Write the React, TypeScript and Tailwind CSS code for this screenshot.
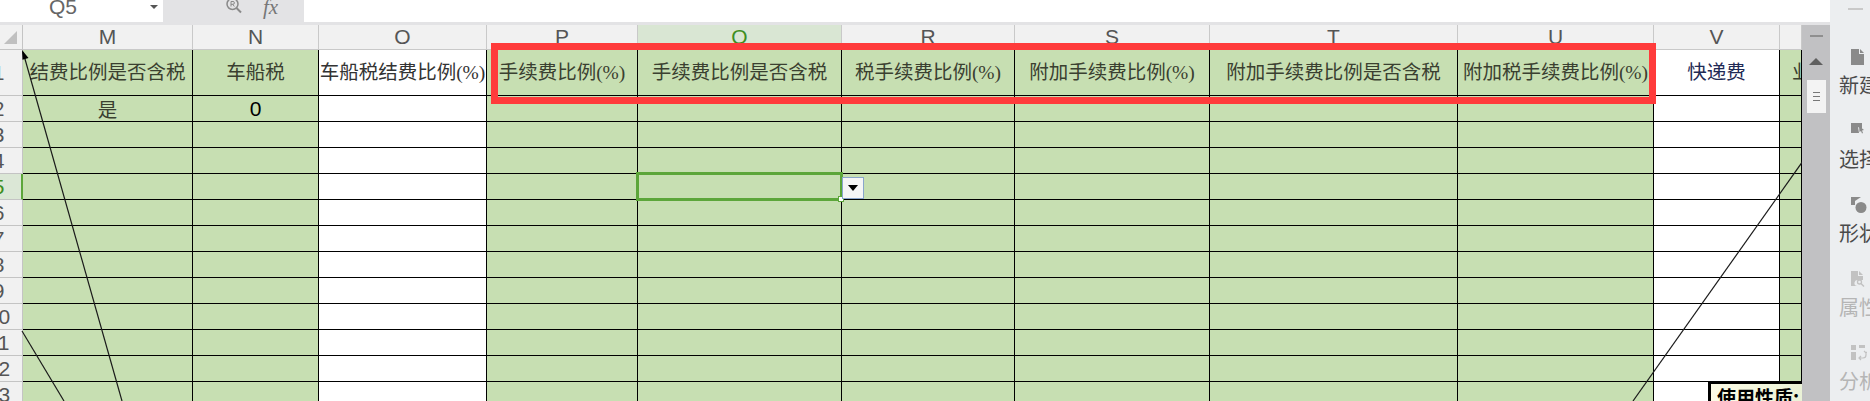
import React from 'react';

const SERIF = "font-['Liberation_Serif','Noto_Sans_CJK_SC',serif]";

const columns = [
  { key: 'M', fill: 'bg-[#c7dfb2]', title: '结费比例是否含税' },
  { key: 'N', fill: 'bg-[#c7dfb2]', title: '车船税' },
  { key: 'O', fill: 'bg-white', title: '车船税结费比例(%)' },
  { key: 'P', fill: 'bg-[#c7dfb2]', title: '手续费比例(%)' },
  { key: 'Q', fill: 'bg-[#c7dfb2]', title: '手续费比例是否含税' },
  { key: 'R', fill: 'bg-[#c7dfb2]', title: '税手续费比例(%)' },
  { key: 'S', fill: 'bg-[#c7dfb2]', title: '附加手续费比例(%)' },
  { key: 'T', fill: 'bg-[#c7dfb2]', title: '附加手续费比例是否含税' },
  { key: 'U', fill: 'bg-[#c7dfb2]', title: '附加税手续费比例(%)' },
  { key: 'V', fill: 'bg-white', title: '快递费' },
  { key: 'W', fill: 'bg-[#c7dfb2]', title: '业务' },
];

const rowNumbers = [2, 3, 4, 5, 6, 7, 8, 9, 10, 11, 12, 13];

const RowLabel: React.FC<{ n: number; tall?: boolean }> = ({ n, tall }) => (
  <div
    className={`flex items-center overflow-hidden border-r border-b border-[#c4c4c4] text-[21px] ${
      tall ? 'h-[46px]' : 'h-[26px]'
    } ${n === 5 ? 'bg-[#dbe7d6] text-[#3f8f1f] border-r-2 border-r-[#5ca63a]' : 'bg-[#f1f1f1] text-[#555555]'}`}
  >
    <span className="-ml-[25px] w-[47px] shrink-0 text-center">{n}</span>
  </div>
);

const PanelItem: React.FC<{ label: string; muted?: boolean; icon: React.ReactNode }> = ({ label, muted, icon }) => (
  <div className="h-[74px] shrink-0 pl-[9px]">
    <div className="h-[26px] pl-[12px]">{icon}</div>
    <div
      className={`w-[31px] overflow-hidden whitespace-nowrap text-[20px] leading-[20px] font-['Noto_Sans_CJK_SC',sans-serif] ${
        muted ? 'text-[#b5b5b5]' : 'text-[#4a4a4a]'
      }`}
    >
      {label}
    </div>
  </div>
);

export default function App() {
  return (
    <div className="flex h-[401px] w-[1870px] overflow-hidden bg-[#eceef0] font-['Liberation_Sans',sans-serif]">
      <div className="flex w-[1830px] shrink-0 flex-col">
        {/* formula bar */}
        <div className="flex h-[25px] shrink-0 bg-[#e3e3e5] pb-[3px]">
          <div className="relative flex w-[163px] items-start overflow-hidden bg-white pl-[49px] text-[21px] leading-[16px] text-[#666666]">
            <span className="-mt-[1px]">Q5</span>
            <span className="absolute left-[150px] top-[5px] border-x-[4px] border-t-[4px] border-x-transparent border-t-[#555555]" />
          </div>
          <div className="flex w-[141px] items-start overflow-hidden pl-[63px]">
            <svg width="16" height="14" viewBox="0 0 16 14" fill="none" stroke="#8a8a8a" strokeWidth="1.5">
              <circle cx="6.5" cy="4" r="5.5" />
              <path d="M10.5 8l4.5 4.5" strokeWidth="2" />
              <path d="M5 6.5v-5h2a1.3 1.3 0 010 2.8H5M6.8 4.3l1.5 2.2" strokeWidth="1" />
            </svg>
            <span className="-mt-[5px] ml-[21px] font-['Liberation_Serif',serif] text-[21px] italic leading-[24px] text-[#777777]">fx</span>
          </div>
          <div className="flex-1 bg-white" />
        </div>

        <div className="flex min-h-0 flex-1">
          {/* sheet */}
          <div className="relative w-[1802px] shrink-0 overflow-hidden">
            <div className="grid grid-cols-[23px_170px_126px_168px_151px_204px_173px_195px_248px_196px_126px_22px]">
              {/* column letters */}
              <div className="flex h-[25px] items-center justify-center border-r border-b border-[#c4c4c4] bg-[#f1f1f1]">
                <div className="mr-[1px] h-0 w-0 border-b-[13px] border-l-[13px] border-b-[#c0c0c0] border-l-transparent" />
              </div>
              {columns.map((c) => (
                <div
                  key={c.key}
                  className={`flex h-[25px] items-center justify-center border-r border-b border-[#c9c9c9] text-[21px] ${
                    c.key === 'Q' ? 'bg-[#d9e6d3] text-[#3f8f1f]' : 'bg-[#f1f1f1] text-[#555555]'
                  }`}
                >
                  {c.key !== 'W' && c.key}
                </div>
              ))}

              {/* title row */}
              <RowLabel n={1} tall />
              {columns.map((c) => (
                <div
                  key={c.key}
                  className={`flex h-[46px] items-center overflow-hidden whitespace-nowrap border-r border-b border-black text-[19.5px] ${SERIF} ${c.fill} ${
                    c.key === 'W' ? 'justify-start pl-[12px]' : 'justify-center'
                  } ${c.key === 'V' ? 'text-[#1f2a55]' : c.key === 'O' ? 'text-[#333333]' : 'text-[#3a4030]'}`}
                >
                  {c.title}
                </div>
              ))}

              {/* data rows */}
              {rowNumbers.map((n) => (
                <React.Fragment key={n}>
                  <RowLabel n={n} />
                  {columns.map((c) => (
                    <div
                      key={c.key}
                      className={`flex h-[26px] items-center justify-center border-r border-b border-black ${c.fill}`}
                    >
                      {n === 2 && c.key === 'M' && (
                        <span className="font-['Noto_Sans_CJK_SC',sans-serif] text-[19.5px] text-[#3a4030]">是</span>
                      )}
                      {n === 2 && c.key === 'N' && <span className="text-[21px] font-medium text-black">0</span>}
                    </div>
                  ))}
                </React.Fragment>
              ))}
            </div>

            {/* drawn arrows on the sheet */}
            <svg className="pointer-events-none absolute left-0 top-0" width="1802" height="376" fill="none" stroke="#1a1a1a" strokeWidth="1.2">
              <path d="M23 27L122 376" />
              <path d="M22 306L64 376" />
              <path d="M1803 136L1633 376" />
              <path d="M22 25l6.500 8-6 1.800z" fill="#000000" stroke="none" />
            </svg>

            {/* selected cell */}
            <div className="absolute left-[636px] top-[147px] h-[29px] w-[207px] border-[3px] border-[#5ca63a]" />
            <div className="absolute left-[838px] top-[171px] h-[6px] w-[6px] border border-[#5ca63a] bg-white" />
            <div className="absolute left-[842px] top-[152px] flex h-[22px] w-[22px] items-center justify-center border border-[#8aa6cc] bg-[#f6f6f6]">
              <span className="border-x-[5px] border-t-[6px] border-x-transparent border-t-black" />
            </div>

            {/* highlight box */}
            <div className="absolute left-[491px] top-[18px] h-[61px] w-[1165px] border-[7px] border-[#ff3b3b]" />

            {/* note box */}
            <div className="absolute left-[1708px] top-[356px] h-[40px] w-[120px] border-l-[3px] border-t-[3px] border-black bg-gradient-to-r from-[#fdfbe6] to-[#e4efd2] pl-[6px] font-['Noto_Sans_CJK_SC',sans-serif] text-[19px] font-bold leading-[26px] text-black">
              使用性质:
            </div>
          </div>

          {/* vertical scrollbar */}
          <div className="flex w-[28px] shrink-0 flex-col items-center bg-[#c1c1c3]">
            <div className="mt-[10px] h-[2px] w-[13px] bg-[#8f8f8f]" />
            <div className="mt-[21px] border-x-[7px] border-b-[7px] border-x-transparent border-b-[#5f5f5f]" />
            <div className="mt-[15px] flex h-[33px] w-[19px] flex-col items-center justify-center gap-[3px] bg-[#f3f3f3]">
              <div className="h-[1px] w-[7px] bg-[#777777]" />
              <div className="h-[1px] w-[7px] bg-[#777777]" />
              <div className="h-[1px] w-[7px] bg-[#777777]" />
            </div>
          </div>
        </div>
      </div>

      {/* task panel */}
      <div className="flex w-[40px] shrink-0 flex-col bg-[#eceef0]">
        <div className="ml-[18px] mt-[8px] h-[3px] w-[15px] border-y border-[#c9c9c9]" />
        <div className="h-[39px] shrink-0" />
        <PanelItem
          label="新建"
          icon={
            <svg width="13" height="16" viewBox="0 0 13 16" fill="#8a8a8a">
              <path d="M0 0h8v5h5v11H0zM9 0l4 4H9z" />
            </svg>
          }
        />
        <PanelItem
          label="选择"
          icon={
            <svg width="13" height="16" viewBox="0 0 13 16" fill="#8a8a8a">
              <path d="M0 0h11v6l-4-2 1 6H0z" />
              <path d="M8 3l5 4-2 .5 1 2.500-1 .5-1-2.500-1.500 1z" />
            </svg>
          }
        />
        <PanelItem
          label="形状"
          icon={
            <svg width="16" height="16" viewBox="0 0 16 16" fill="#8a8a8a">
              <path d="M0 0h10L4 4v4H0z" />
              <circle cx="10" cy="10.500" r="5.500" />
            </svg>
          }
        />
        <PanelItem
          label="属性"
          muted
          icon={
            <svg width="15" height="16" viewBox="0 0 15 16" fill="#c2c2c2">
              <path d="M0 0h7v5h5v4H7a3 3 0 00-1 6H0zM8 0l4 4H8z" />
              <circle cx="8.500" cy="11" r="2" fill="none" stroke="#c2c2c2" strokeWidth="1.300" />
              <path d="M10 12.500l3 3" stroke="#c2c2c2" strokeWidth="1.500" />
            </svg>
          }
        />
        <PanelItem
          label="分析"
          muted
          icon={
            <svg width="16" height="16" viewBox="0 0 16 16" fill="#c2c2c2">
              <path d="M0 0h5v5H0zM0 7h5v8H0zM8 0h6v3H8z" />
              <path d="M8 13h4a3 3 0 003-3V8M13 6l2 2 1-1M10 11l-2 2 2 2" fill="none" stroke="#c2c2c2" strokeWidth="1.200" />
            </svg>
          }
        />
      </div>
    </div>
  );
}
